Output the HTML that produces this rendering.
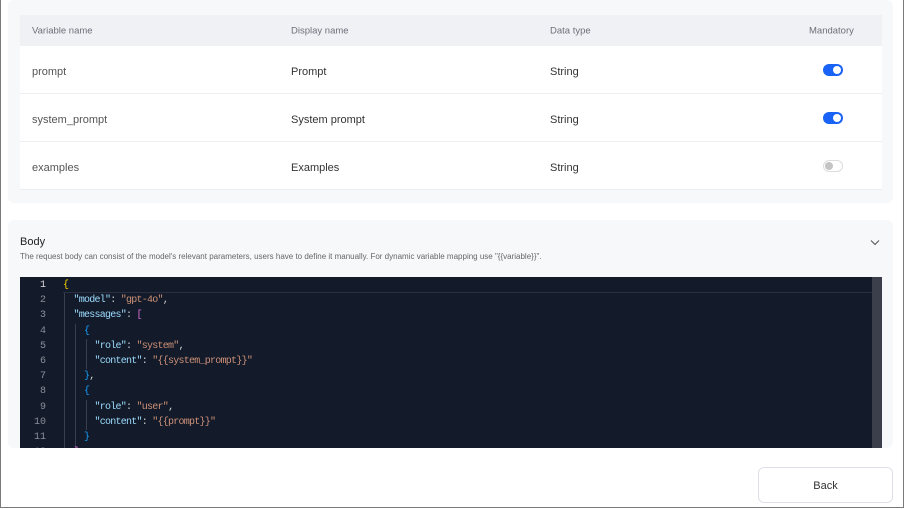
<!DOCTYPE html>
<html><head><style>
body{margin:0;width:905px;height:509px;overflow:hidden;background:#fff;font-family:"Liberation Sans",sans-serif;position:relative}
.frame{position:absolute;left:0;top:-2px;width:902px;height:509px;border:1px solid #7a7a7a;border-top:none}
.card{position:absolute;left:8px;width:885px;background:#f7f8fa;border-radius:6px}
.tbl{position:absolute;left:20px;width:862px}
.row{position:absolute;left:0;width:862px;background:#fff;border-bottom:1px solid #eceef1;font-size:11px;color:#555}
.row span{position:absolute;top:calc(50% + 2px);transform:translateY(-50%)}
.hd{background:#eff1f4;color:#6b6f78;font-size:9.5px}
.hd span{top:50%}
.tog{position:absolute;left:803px;width:20px;height:12px;border-radius:7px;top:50%;transform:translateY(-50%)}
.on{background:#1862f5}.on:after{content:"";position:absolute;right:2px;top:2px;width:8px;height:8px;border-radius:50%;background:#fff}
.off{background:#fff;border:1px solid #ddd;width:18px;height:10px}.off:after{content:"";position:absolute;left:1px;top:1px;width:8px;height:8px;border-radius:50%;background:#c4c4c4}
.ed{position:absolute;left:20px;top:277px;width:862px;height:171px;background:#131a29;overflow:hidden;font-family:"Liberation Mono","DejaVu Sans Mono",monospace;font-size:10px}
.ln{position:absolute;left:0;width:46px;text-align:right;color:#8a8f99}
.cd{position:absolute;left:43px;white-space:pre;color:#d4d4d4;letter-spacing:-0.75px}
.k{color:#9cdcfe}.s{color:#ce9178}.y{color:#ffd700}.p{color:#da70d6}.b{color:#179fff}
</style></head><body>
<div class="card" style="top:0;height:203px"></div>
<div class="tbl" style="top:15px">
<div class="row hd" style="top:0;height:31px;border:none"><span style="left:12px">Variable name</span><span style="left:271px">Display name</span><span style="left:530px">Data type</span><span style="left:789px">Mandatory</span></div>
<div class="row" style="top:31px;height:47px"><span style="left:12px">prompt</span><span style="left:271px;color:#333">Prompt</span><span style="left:530px;color:#333">String</span><div class="tog on"></div></div>
<div class="row" style="top:79px;height:47px"><span style="left:12px">system_prompt</span><span style="left:271px;color:#333">System prompt</span><span style="left:530px;color:#333">String</span><div class="tog on"></div></div>
<div class="row" style="top:127px;height:47px"><span style="left:12px">examples</span><span style="left:271px;color:#333">Examples</span><span style="left:530px;color:#333">String</span><div class="tog off"></div></div>
</div>
<div class="card" style="top:220px;height:228px"></div>
<div style="position:absolute;left:20px;top:236px;font-size:11px;color:#222">Body</div>
<div style="position:absolute;left:20px;top:252px;font-size:8px;color:#666">The request body can consist of the model's relevant parameters, users have to define it manually. For dynamic variable mapping use "{{variable}}".</div>
<svg style="position:absolute;left:870px;top:239px" width="10" height="7"><path d="M1 1.5l4 4 4-4" fill="none" stroke="#555" stroke-width="1.1"/></svg>
<div class="ed">
<div style="position:absolute;left:43px;top:15px;width:810px;height:1px;background:#2a3040"></div>
<div style="position:absolute;left:852px;top:0;width:10px;height:171px;background:#3a3f4b"></div>
<div style="position:absolute;left:44px;top:16px;width:1px;height:160px;background:#3a3f4b"></div>
<div style="position:absolute;left:55px;top:47px;width:1px;height:130px;background:#3a3f4b"></div>
<div style="position:absolute;left:66px;top:62px;width:1px;height:30px;background:#3a3f4b"></div>
<div style="position:absolute;left:66px;top:123px;width:1px;height:30px;background:#3a3f4b"></div>
<div id="lines"></div>
</div>
<div style="position:absolute;left:758px;top:467px;width:133px;height:34px;border:1px solid #dde0e6;border-radius:6px;background:#fff;text-align:center;line-height:36px;font-size:11px;color:#333">Back</div>
<div class="frame"></div>
<script>
var L=['<span class="y">{</span>',
'  <span class="k">"model"</span>: <span class="s">"gpt-4o"</span>,',
'  <span class="k">"messages"</span>: <span class="p">[</span>',
'    <span class="b">{</span>',
'      <span class="k">"role"</span>: <span class="s">"system"</span>,',
'      <span class="k">"content"</span>: <span class="s">"{{system_prompt}}"</span>',
'    <span class="b">}</span>,',
'    <span class="b">{</span>',
'      <span class="k">"role"</span>: <span class="s">"user"</span>,',
'      <span class="k">"content"</span>: <span class="s">"{{prompt}}"</span>',
'    <span class="b">}</span>',
'  <span class="p">]</span>'];
var h='';for(var i=0;i<L.length;i++){var t=3+i*15.2;h+='<div class="ln" style="top:'+t+'px;width:26px;'+(i==0?'color:#ddd':'')+'">'+(i+1)+'</div><div class="cd" style="top:'+t+'px">'+L[i]+'</div>';}
document.getElementById('lines').innerHTML=h;
</script>
</body></html>
